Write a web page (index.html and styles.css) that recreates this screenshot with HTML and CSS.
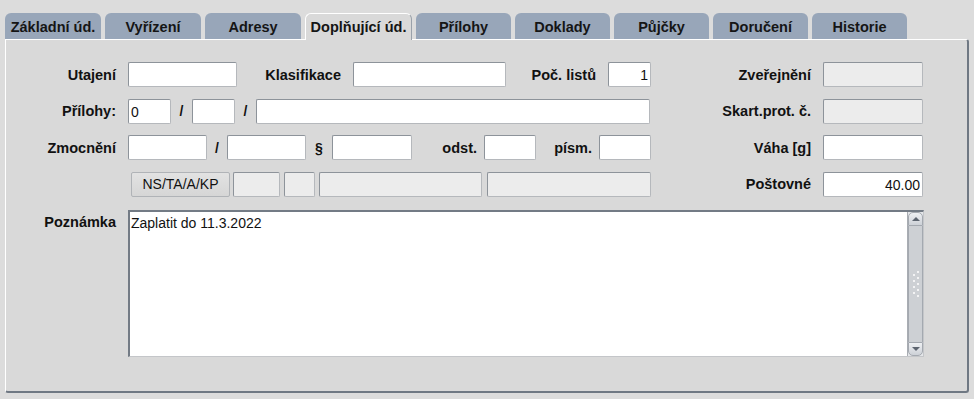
FILE: index.html
```html
<!DOCTYPE html>
<html lang="cs">
<head>
  <meta charset="UTF-8"/>
  <title>Doplňující údaje</title>
  <link rel="stylesheet" href="styles.css">
</head>
<body>
  <!-- Záložky -->
  <div class="tabs">
    <div class="tab">Základní úd.</div>
    <div class="tab">Vyřízení</div>
    <div class="tab">Adresy</div>
    <div class="tab active">Doplňující úd.</div>
    <div class="tab">Přílohy</div>
    <div class="tab">Doklady</div>
    <div class="tab">Půjčky</div>
    <div class="tab">Doručení</div>
    <div class="tab">Historie</div>
  </div>

  <div class="panel">
    <div class="row">
      <label class="lbl w122">Utajení</label>
      <input class="fld w109" type="text">
      <label class="lbl w116">Klasifikace</label>
      <input class="fld w153" type="text">
      <label class="lbl w102">Poč. listů</label>
      <input class="fld w43 num" type="text" value="1">
      <label class="lbl w172">Zveřejnění</label>
      <input class="fld w100" type="text" disabled>
    </div>

    <div class="row">
      <label class="lbl w122">Přílohy:</label>
      <input class="fld w43" type="text" value="0">
      <span class="sep w21">/</span>
      <input class="fld w43" type="text">
      <span class="sep w21">/</span>
      <input class="fld w394" type="text">
      <label class="lbl w173">Skart.prot. č.</label>
      <input class="fld w100" type="text" disabled>
    </div>

    <div class="row">
      <label class="lbl w122">Zmocnění</label>
      <input class="fld w79" type="text">
      <span class="sep w20">/</span>
      <input class="fld w79" type="text">
      <span class="sep w26">§</span>
      <input class="fld w80" type="text">
      <label class="lbl tight w72">odst.</label>
      <input class="fld w52" type="text">
      <label class="lbl tight w63">písm.</label>
      <input class="fld w52" type="text">
      <label class="lbl w172">Váha [g]</label>
      <input class="fld w100" type="text">
    </div>

    <div class="row">
      <span class="spacer"></span>
      <button class="btn" type="button">NS/TA/A/KP</button>
      <input class="fld w47 ml3" type="text" disabled>
      <input class="fld w31 ml4" type="text" disabled>
      <input class="fld w163 ml4" type="text" disabled>
      <input class="fld w164 ml5" type="text" disabled>
      <label class="lbl w172">Poštovné</label>
      <input class="fld w100 num" type="text" value="40.00">
    </div>

    <div class="row memo-row">
      <label class="lbl w122 top">Poznámka</label>
      <div class="memo">
        <div class="memo-text">Zaplatit do 11.3.2022</div>
        <div class="scrollbar">
          <div class="sb-btn up"></div>
          <div class="sb-thumb">
            <svg width="8" height="28" viewBox="0 0 8 28">
              <g fill="#fff">
                <circle cx="6" cy="2" r="1"/><circle cx="2" cy="5" r="1"/>
                <circle cx="6" cy="8" r="1"/><circle cx="2" cy="11" r="1"/>
                <circle cx="6" cy="14" r="1"/><circle cx="2" cy="17" r="1"/>
                <circle cx="6" cy="20" r="1"/><circle cx="2" cy="23" r="1"/>
                <circle cx="6" cy="26" r="1"/>
              </g>
            </svg>
          </div>
          <div class="sb-btn down"></div>
        </div>
      </div>
    </div>
  </div>
</body>
</html>
```

FILE: styles.css
```css
* { box-sizing: border-box; margin: 0; padding: 0; }

body {
  background: #dcdcdc;
  color: #111;
  font-family: "Liberation Sans", Arial, sans-serif;
  font-size: 14px;
  padding: 13px 5px 0;
}

/* Záložky */
.tabs {
  display: flex;
  gap: 4px;
  height: 26px;
}
.tab {
  width: 96px;
  background: #98a6b9;
  border-radius: 6px 6px 0 0;
  font-weight: bold;
  font-size: 14.5px;
  text-align: center;
  line-height: 28px;
  color: #151515;
}
.tab:nth-child(n+5) { width: 95px; }
.tab.active {
  width: 107px;
  background: #d9d9d9;
  border-top: 1px solid #fff;
  border-left: 1px solid #fff;
  border-right: 1px solid #9aa1aa;
  line-height: 26px;
  position: relative;
  z-index: 1;
  height: 27px;
}

/* Panel */
.panel {
  width: 964px;
  background: #d9d9d9;
  border-top: 1px solid #fff;
  border-left: 1px solid #fff;
  border-right: 2px solid #6f7883;
  border-bottom: 2px solid #6f7883;
  border-radius: 0 3px 3px 3px;
  padding: 22px 0 34px;
}

.row {
  display: flex;
  align-items: center;
  height: 25px;
  margin-bottom: 11.5px;
}

.lbl {
  font-weight: bold;
  font-size: 14.5px;
  text-align: right;
  padding-right: 12px;
  flex: none;
}
.lbl.tight { padding-right: 7px; }
.lbl.top { align-self: flex-start; padding-top: 4px; }

.sep {
  font-weight: bold;
  font-size: 14px;
  text-align: center;
  flex: none;
}

.fld {
  height: 25px;
  flex: none;
  font-family: "Liberation Sans", Arial, sans-serif;
  font-size: 14px;
  color: #111;
  background: #fff;
  border: 1px solid #b5b8bc;
  border-top-color: #8d939a;
  border-left-color: #8d939a;
  border-radius: 2px;
  padding: 1px 2px 0;
  outline: none;
}
.fld:disabled { background: #ececec; }
.fld.num { text-align: right; }

.btn {
  width: 99px;
  height: 25px;
  flex: none;
  font-family: "Liberation Sans", Arial, sans-serif;
  font-size: 14px;
  color: #111;
  background: linear-gradient(#e2e2e2, #d6d6d6);
  border: 1px solid #b0b3b7;
  border-radius: 2px;
}

.spacer { width: 125px; flex: none; }

/* Šířky */
.w20 { width: 20px; }
.w21 { width: 21px; }
.w26 { width: 26px; }
.w31 { width: 31px; }
.w43 { width: 43px; }
.w47 { width: 47px; }
.w52 { width: 52px; }
.w63 { width: 63px; }
.w72 { width: 72px; }
.w79 { width: 79px; }
.w80 { width: 80px; }
.w100 { width: 100px; }
.w102 { width: 102px; }
.w109 { width: 109px; }
.w116 { width: 116px; }
.w122 { width: 122px; }
.w153 { width: 153px; }
.w163 { width: 163px; }
.w164 { width: 164px; }
.w172 { width: 172px; }
.w173 { width: 173px; }
.w394 { width: 394px; }
.ml3 { margin-left: 3px; }
.ml4 { margin-left: 4px; }
.ml5 { margin-left: 5px; }

/* Poznámka */
.memo-row {
  height: 147px;
  align-items: stretch;
  margin-top: 13px;
  margin-bottom: 0;
}
.memo {
  width: 796px;
  display: flex;
  background: #fff;
  border: 1px solid #c4c6c9;
  border-top: 2px solid #737b85;
  border-left: 2px solid #737b85;
}
.memo-text {
  flex: 1;
  padding: 3px 1px;
  font-size: 14px;
}

.scrollbar {
  width: 16px;
  display: flex;
  flex-direction: column;
  background: #e4e6e9;
  border-left: 1px solid #a9adb3;
}
.sb-btn {
  height: 14px;
  background: linear-gradient(#eef0f3, #cdd1d7);
  border: 1px solid #a4a9b0;
  border-radius: 5px 5px 0 0;
  display: flex;
  align-items: center;
  justify-content: center;
}
.sb-btn.down { border-radius: 0 0 5px 5px; }
.sb-btn::after {
  content: "";
  border-left: 4px solid transparent;
  border-right: 4px solid transparent;
}
.sb-btn.up::after { border-bottom: 4px solid #5d6570; }
.sb-btn.down::after { border-top: 4px solid #5d6570; }
.sb-thumb {
  flex: 1;
  background: #cdd0d4;
  border: 1px solid #a4a9b0;
  border-top: none;
  border-bottom: none;
  display: flex;
  align-items: center;
  justify-content: center;
}
```
